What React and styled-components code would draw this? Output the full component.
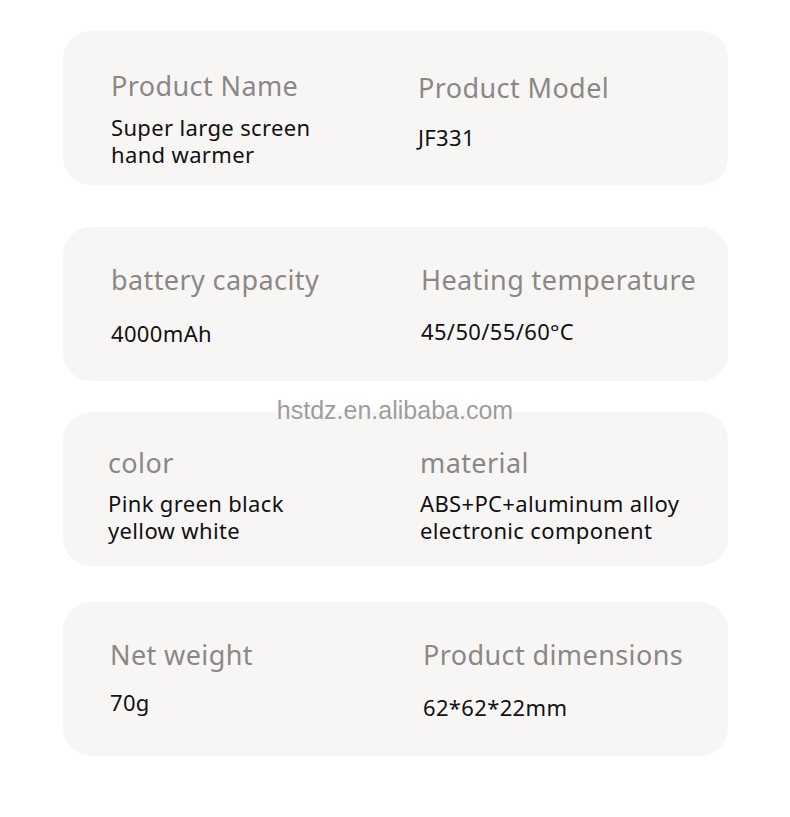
import React from "react";
import styled, { createGlobalStyle } from "styled-components";

const Global = createGlobalStyle`
  html, body { margin: 0; padding: 0; background: #ffffff; }
  body { font-family: "Noto Sans", "Open Sans", sans-serif; }
`;

const Page = styled.div`
  position: relative;
  width: 790px;
  height: 817px;
  padding-top: 31px;
  box-sizing: border-box;
`;

const Card = styled.section`
  display: flex;
  margin: ${(p) => p.$top}px 0 0 63px;
  width: 665px;
  height: 154px;
  border-radius: 28px;
  background: #f8f6f5;
  box-sizing: border-box;
`;

const Column = styled.div`
  display: flex;
  flex-direction: column;
  box-sizing: border-box;
  margin-left: ${(p) => p.$x}px;
  width: ${(p) => (p.$w ? `${p.$w}px` : "auto")};
  padding-top: ${(p) => p.$y}px;
`;

const Label = styled.div`
  font-size: 27px;
  line-height: 32px;
  letter-spacing: 0.4px;
  color: #8a8887;
  white-space: nowrap;
  margin-bottom: ${(p) => p.$gap}px;
`;

const Value = styled.div`
  font-size: 22px;
  line-height: 27px;
  letter-spacing: 0.35px;
  color: #111111;
  white-space: pre-line;
`;

const Watermark = styled.div`
  position: absolute;
  left: 0;
  right: 0;
  top: 394px;
  text-align: center;
  font-family: "Liberation Sans", Arial, sans-serif;
  font-size: 25px;
  line-height: 32px;
  color: #9d9d9d;
  text-shadow: 0 0 1px #ffffff, 0 0 2px #ffffff;
`;

const cards = [
  {
    top: 0,
    cols: [
      { x: 48, w: 307, y: 39, gap: 11.5, label: "Product Name", value: "Super large screen\nhand warmer" },
      { x: 0, y: 41, gap: 19.5, label: "Product Model", value: "JF331" },
    ],
  },
  {
    top: 42,
    cols: [
      { x: 48, w: 310, y: 37, gap: 23.5, label: "battery capacity", value: "4000mAh" },
      { x: 0, y: 37, gap: 21.5, label: "Heating temperature", value: "45/50/55/60\u00b0C" },
    ],
  },
  {
    top: 31,
    cols: [
      { x: 45, w: 312, y: 35, gap: 10.5, label: "color", value: "Pink green black\nyellow white" },
      { x: 0, y: 35, gap: 10.5, label: "material", value: "ABS+PC+aluminum alloy\nelectronic component" },
    ],
  },
  {
    top: 36,
    cols: [
      { x: 47, w: 313, y: 37, gap: 17.5, label: "Net weight", value: "70g" },
      { x: 0, y: 37, gap: 22.5, label: "Product dimensions", value: "62*62*22mm" },
    ],
  },
];

export default function App() {
  return (
    <Page>
      <Global />
      {cards.map((c, i) => (
        <Card key={i} $top={c.top}>
          {c.cols.map((col, j) => (
            <Column key={j} $x={col.x} $w={col.w} $y={col.y}>
              <Label $gap={col.gap}>{col.label}</Label>
              <Value>{col.value}</Value>
            </Column>
          ))}
        </Card>
      ))}
      <Watermark>hstdz.en.alibaba.com</Watermark>
    </Page>
  );
}
